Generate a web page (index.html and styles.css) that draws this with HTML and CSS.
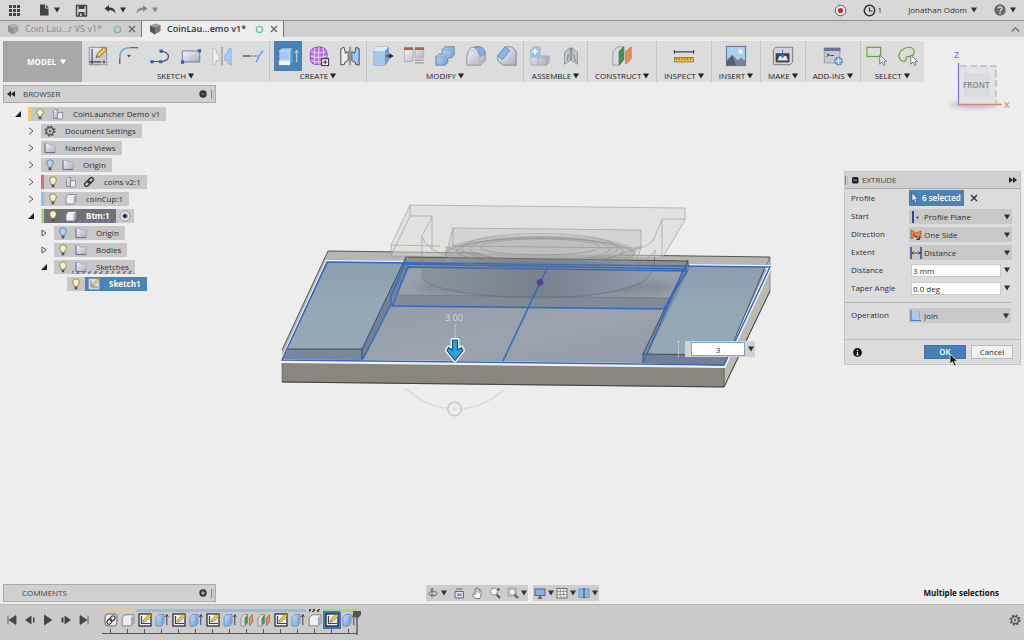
FILE: index.html
```html
<!DOCTYPE html>
<html lang="en">
<head>
<meta charset="utf-8">
<title>CoinLauncher Demo v1</title>
<link rel="stylesheet" href="styles.css">
</head>
<body>
<svg class="defs" aria-hidden="true">
  <defs>
    <linearGradient id="gBlue" x1="0" y1="0" x2="1" y2="1"><stop offset="0" stop-color="#c3dcf6"/><stop offset="1" stop-color="#6d9fda"/></linearGradient>
    <linearGradient id="gGrey" x1="0" y1="0" x2="1" y2="1"><stop offset="0" stop-color="#f6f6fa"/><stop offset="1" stop-color="#a9acba"/></linearGradient>
    <symbol id="caret" viewBox="0 0 6 6"><path d="M0 0.5h6L3 5.5z" fill="currentColor"/></symbol>
    <symbol id="cube-tab" viewBox="0 0 12 12"><path d="M1 2.5 6.5 0.5 11.5 2 6 4.5z" fill="#999"/><path d="M1 2.5 6 4.5V11.5L1 8.5z" fill="#555"/><path d="M6 4.5 11.5 2V8L6 11.5z" fill="#777"/></symbol>
    <symbol id="x" viewBox="0 0 8 8"><path d="M1 1 7 7M7 1 1 7" stroke="currentColor" stroke-width="1.4"/></symbol>
    <symbol id="ring" viewBox="0 0 8 8"><circle cx="4" cy="4" r="2.8" fill="none" stroke="#66c2a4" stroke-width="1.2"/></symbol>
    <symbol id="bulb" viewBox="0 0 12 12"><path d="M6 .8a3.3 3.3 0 0 1 3.3 3.3C9.300 5.800 7.800 6.400 7.700 8.400H4.300C4.200 6.400 2.700 5.800 2.700 4.100A3.300 3.300 0 0 1 6 .8z" fill="#fff3b5" stroke="#78705a" stroke-width=".8"/><path d="M4.500 9.200h3M4.800 10.600h2.400" stroke="#444" stroke-width="1.1"/></symbol>
    <symbol id="bulb-off" viewBox="0 0 12 12"><path d="M6 .8a3.3 3.3 0 0 1 3.3 3.3C9.300 5.800 7.800 6.400 7.700 8.400H4.300C4.200 6.400 2.700 5.800 2.700 4.100A3.300 3.300 0 0 1 6 .8z" fill="#b3d3f1" stroke="#5d748c" stroke-width=".8"/><path d="M4.500 9.200h3M4.800 10.600h2.400" stroke="#444" stroke-width="1.1"/></symbol>
    <symbol id="folder" viewBox="0 0 12 12"><path d="M.8 10.500V1.500H4.500L5.500 3H11.300V10.500z" fill="url(#gGrey)" stroke="#a3a5b3" stroke-width=".7"/><path d="M1 1.500V10.600H11" fill="none" stroke="#6b6e80"/></symbol>
    <symbol id="comp" viewBox="0 0 12 12"><path d="M1.500 2.500 2.500 1.500H5.500V10.500H1.500z" fill="url(#gGrey)" stroke="#7f8294" stroke-width=".8"/><path d="M5.500 5.500 7 4.500H10.500V9.500L9.500 11H5.500z" fill="#e9eaf0" stroke="#7f8294" stroke-width=".8"/></symbol>
    <symbol id="box" viewBox="0 0 12 12"><path d="M1 4 3.500 1.500H11V8.500L8.500 11H1z" fill="#efeff4" stroke="#777988" stroke-width=".8" stroke-linejoin="round"/><path d="M8.500 11V4L11 1.500V8.500z" fill="#aaacba"/></symbol>
    <symbol id="link" viewBox="0 0 12 12"><g fill="none" stroke="#333" stroke-width="1.300" transform="rotate(-45 6 6)"><rect x=".6" y="4" width="6.200" height="4" rx="2"/><rect x="5.200" y="4" width="6.200" height="4" rx="2"/></g></symbol>
    <symbol id="link-box" viewBox="0 0 14 14"><rect x="1" y="1" width="12" height="12" rx="3" fill="#e8e8e8" stroke="#666"/><g fill="none" stroke="#333" stroke-width="1.100" transform="rotate(-45 7 7)"><rect x="2" y="5" width="5.600" height="4" rx="2"/><rect x="6.400" y="5" width="5.600" height="4" rx="2"/></g></symbol>
    <symbol id="gear" viewBox="0 0 12 12"><circle cx="6" cy="6" r="4.700" fill="none" stroke="#555" stroke-width="1.600" stroke-dasharray="2 1.690"/><circle cx="6" cy="6" r="3.500" fill="none" stroke="#555" stroke-width="1.300"/><circle cx="6" cy="6" r="1.200" fill="#555"/></symbol>
    <symbol id="sketch" viewBox="0 0 14 14"><rect x="1" y="1" width="12" height="12" fill="#f0f1f5" stroke="#223" stroke-width="1.200"/><path d="M3.500 3V10.500H12" fill="none" stroke="#3c3f4c" stroke-width="1.200"/><path d="M5 9 5.800 6.500 11.500 1 13.500 3 7.500 8.500z" fill="#f3c544" stroke="#7a5a10" stroke-width=".6"/></symbol>
    <symbol id="sketch-light" viewBox="0 0 14 14"><rect x="1" y="1" width="12" height="12" fill="#dfe3ec" stroke="#9fb0c6" stroke-width=".8"/><path d="M3.500 3V10.500H12" fill="none" stroke="#5a6072"/><path d="M5 9 5.800 6.500 11.500 1 13.500 3 7.500 8.500z" fill="#f3d566" stroke="#7a6a30" stroke-width=".6"/></symbol>
    <symbol id="ext" viewBox="0 0 14 14"><path d="M1 4.500 3.500 1.500H9V10L6.500 13H1z" fill="url(#gBlue)" stroke="#6684a6" stroke-width=".8" stroke-linejoin="round"/><path d="M6.500 13V4.500L9 1.500V10z" fill="#7ba3d4"/><path d="M11.800 12V2M10.300 4 11.800 1.500 13.300 4" fill="none" stroke="#333" stroke-width=".9"/></symbol>
    <symbol id="plane" viewBox="0 0 14 14"><path d="M1 5 4 1.500H7.500V10L4.500 13H1z" fill="#dcdee2" stroke="#777" stroke-width=".7"/><path d="M4.500 5 7.500 1.500V10L4.500 13z" fill="#459a58"/><path d="M9.500 4.500 12.500 1.500V9.500L9.500 12.500z" fill="#ea8f5c" stroke="#a65329" stroke-width=".6"/></symbol>
    <symbol id="cursor" viewBox="0 0 10 14"><path d="M1 1V11L3.500 8.800 5.300 13 7.200 12.100 5.400 8.200H8.600z" fill="#111" stroke="#eee" stroke-width=".8"/></symbol>
    <symbol id="tri-open" viewBox="0 0 8 8"><path d="M7 1V7H1z" fill="#222"/></symbol>
    <symbol id="chev" viewBox="0 0 8 8"><path d="M2 .8 6 4 2 7.200" fill="none" stroke="#555"/></symbol>
    <symbol id="tri" viewBox="0 0 8 8"><path d="M2 1 6 4 2 7z" fill="#f4f4f4" stroke="#444" stroke-width=".9"/></symbol>
  </defs>
</svg>

<header class="topbar">
  <button class="plain" aria-label="Data panel"><svg class="i13" viewBox="0 0 13 13"><path d="M1 1h3v3H1zM5 1h3v3H5zM9 1h3v3H9zM1 5h3v3H1zM5 5h3v3H5zM9 5h3v3H9zM1 9h3v3H1zM5 9h3v3H5zM9 9h3v3H9z" fill="#444"/></svg></button>
  <button class="plain drop" aria-label="File"><svg class="i12" viewBox="0 0 12 12"><path d="M2 .5H7V4.500H10.500V11.500H2zM7.800.5 10.500 3.700H7.800z" fill="#444"/></svg><svg class="car"><use href="#caret"/></svg></button>
  <button class="plain save" aria-label="Save"><svg class="i13" viewBox="0 0 13 13"><path d="M1.500 1.500H11.500V12H1.500z" fill="none" stroke="#444" stroke-width="1.400"/><path d="M3.500 1.500H9.500V5H3.500zM3.500 8H9.500V12H3.500z" fill="#444"/><path d="M5 9.500H6.500V12H5z" fill="#ddd"/></svg></button>
  <button class="plain drop undo" aria-label="Undo"><svg class="i12" viewBox="0 0 12 12"><path d="M.5 4.500 5 1V3.500C9 3.300 11.500 5.500 11.500 9.500 10 7 8 6 5 6V8z" fill="#333"/></svg><svg class="car"><use href="#caret"/></svg></button>
  <button class="plain drop redo" aria-label="Redo"><svg class="i12" viewBox="0 0 12 12"><path d="M11.500 4.500 7 1V3.500C3 3.300.5 5.500.5 9.500 2 7 4 6 7 6V8z" fill="#888"/></svg><svg class="car"><use href="#caret"/></svg></button>
  <span class="grow"></span>
  <button class="plain" aria-label="Record"><svg class="i13" viewBox="0 0 13 13"><circle cx="6.500" cy="6.500" r="5.300" fill="#f6efef" stroke="#555"/><circle cx="6.500" cy="6.500" r="2.600" fill="#c92a2a"/></svg></button>
  <button class="plain jobs"><svg class="i13" viewBox="0 0 13 13"><circle cx="6.500" cy="6.500" r="5.200" fill="none" stroke="#333" stroke-width="1.500"/><path d="M6.500 3.500V7H9.500" fill="none" stroke="#333" stroke-width="1.200"/></svg>1</button>
  <button class="plain user">Jonathan Odom <svg class="car"><use href="#caret"/></svg></button>
  <button class="plain help" aria-label="Help"><svg class="i12" viewBox="0 0 12 12"><circle cx="6" cy="6" r="5.700" fill="#666"/><path d="M4 4.600C4 2.200 8 2.200 8 4.500 8 6 6 6 6 7.600M6 8.600V10" fill="none" stroke="#eee" stroke-width="1.300"/></svg><svg class="car"><use href="#caret"/></svg></button>
</header>

<nav class="tabs">
  <div class="tab off"><svg class="i12"><use href="#cube-tab"/></svg><a href="#v5">Coin Lau...r V5 v1*</a><svg class="i9"><use href="#ring"/></svg><button class="plain" aria-label="Close tab"><svg class="i8"><use href="#x"/></svg></button></div>
  <div class="tab on"><svg class="i12"><use href="#cube-tab"/></svg><a href="#demo">CoinLau...emo v1*</a><svg class="i9"><use href="#ring"/></svg><button class="plain" aria-label="Close tab"><svg class="i8"><use href="#x"/></svg></button></div>
  <button class="plain collapse" aria-label="Collapse"><svg class="i9" viewBox="0 0 9 9"><path d="M.8 6.500 4.500 2.800 8.200 6.500" fill="none" stroke="#666" stroke-width="1.300"/></svg></button>
</nav>

<main class="work">
  <svg class="scene" viewBox="0 37 1024 567" role="img" aria-label="3D model">
    <defs>
      <linearGradient id="gCyl" x1="0" x2="1"><stop offset="0" stop-color="#8a949f"/><stop offset=".5" stop-color="#77818e"/><stop offset="1" stop-color="#929baa"/></linearGradient>
      <linearGradient id="gFloor" x1="0" x2="1" y1="0" y2="1"><stop offset="0" stop-color="#8d97a3"/><stop offset=".6" stop-color="#9aa3ae"/><stop offset="1" stop-color="#8c95a2"/></linearGradient>
      <linearGradient id="gPanel" x1="0" x2="0" y1="0" y2="1"><stop offset="0" stop-color="#8c9dac"/><stop offset=".5" stop-color="#94a8b6"/></linearGradient>
      <filter id="soft" x="-20%" y="-50%" width="140%" height="200%"><feGaussianBlur stdDeviation="4"/></filter>
    </defs>
    <path d="M328 251 770 257V291L724 387 282 382V350z" fill="#b6b7b0"/>
    <path d="M770 257V291L724 387V367z" fill="#b9bab1" stroke="#555" stroke-width=".6"/>
    <path d="M282 361 724 366V387L282 382z" fill="#8a857e" stroke="#555" stroke-width=".6"/>
    <path d="M282 350 328 251 480 253M620 255 770 257M282 382 724 387 770 291" fill="none" stroke="#333" stroke-width=".8"/>
    <path d="M327 262 770 267 724 366 282 361z" fill="url(#gFloor)" stroke="#eef2f6" stroke-width="4"/>
    <path d="M408 257 688 261V271H405z" fill="#8f8e89"/>
    <path d="M408 267 687 271 664 309 392 306z" fill="#99a0aa"/>
    <ellipse cx="545" cy="287" rx="130" ry="10" fill="#697380" opacity=".5" filter="url(#soft)"/>
    <path d="M397 295 671 298 664 309 392 306z" fill="#828a98"/>
    <path d="M422 265V276C424 288 470 297 535 298 590 298 630 290 645 280 652 275 655 272 655 267 630 258 450 256 422 265z" fill="url(#gCyl)"/>
    <path d="M422 276C424 288 470 297 535 298 590 298 630 290 645 280 652 274 655 266 655 250" fill="none" stroke="#687380" stroke-width=".8"/>
    <path d="M397 295 671 298M408 267 397 295" fill="none" stroke="#66707d" stroke-width=".6"/>
    <path d="M327 262 406 263 362 349H288z" fill="url(#gPanel)"/>
    <path d="M406 257 362 349V360L410 266z" fill="#71819a"/>
    <path d="M288 349H362V360L282 359z" fill="#78879b"/>
    <path d="M688 266 765 267 728 355 643 354z" fill="url(#gPanel)"/>
    <path d="M643 354 728 355 724 366 643 363z" fill="#718095"/>
    <path d="M688 259 643 354V363L690 268z" fill="#7d8ba0"/>
    <path d="M288 349H362V360M362 349 406 257 688 261 643 354V363M643 354 728 355 765 267M285 353 327 263" fill="none" stroke="#2e3844" stroke-width=".8"/>
    <g fill="none" stroke="#3468bf" stroke-width="1.500">
      <path d="M327 262 770 267 724 365 282 360z"/>
      <path d="M408 267 687 271 664 309 392 306z"/>
      <path d="M363 359 391 304V296L405 264M643 363 683 271"/>
      <path d="M403 264 687 269M548 266 503 361"/>
    </g>
    <circle cx="540" cy="282.500" r="3.200" fill="#5b3b9b"/>
    <path d="M410 205 685 208V220L663 257H445L391 256V245z" fill="#d6d6d3" opacity=".5"/>
    <path d="M453 228 641 230V248L630 262H445z" fill="#b0b0ac" opacity=".25"/>
    <ellipse cx="540" cy="252" rx="96" ry="17" fill="#777" opacity=".22"/>
    <g fill="none" stroke="#858585" stroke-width=".7" opacity=".7">
      <path d="M391 256V245L410 205 685 208V220L663 257M410 205V216L391 256M410 216H432V250M422 278V236L432 217M391 245 440 246M391 256 445 257"/>
      <path d="M662 257V219H685M662 219 653 241Q648 246 630 252M453 228 641 230V248L631 275M453 228V246M453 228 445 257M453 246 641 248"/>
      <ellipse cx="540" cy="248" rx="78" ry="14.500"/><ellipse cx="540" cy="249" rx="70" ry="12"/><ellipse cx="540" cy="251" rx="83" ry="13"/><ellipse cx="540" cy="247" rx="60" ry="8"/><ellipse cx="540" cy="254" rx="94" ry="16"/>
      <path d="M422 237Q430 263 540 275 640 278 655 250M445 247Q500 262 560 263 610 262 641 246"/>
    </g>
    <path d="M405 388Q428 409 455 409T503 390" fill="none" stroke="#dadada" stroke-width="1.500"/>
    <circle cx="454.500" cy="409" r="6.800" fill="#eee" stroke="#c8c8c8" stroke-width="1.500"/><circle cx="454.500" cy="409" r="2" fill="#ddd"/>
    <text x="445" y="321" class="dim-text">3.00</text>
    <path d="M455 324V340" stroke="#c0c7cf"/>
    <path d="M452.500 340H457.500V350L461.500 347.500 463 350.500 455 360.500 447 350.500 448.500 347.500 452.500 350z" fill="#2ba4dc" stroke="#f2f6fa" stroke-width="4" stroke-linejoin="round"/>
    <path d="M452.500 340H457.500V350L461.500 347.500 463 350.500 455 360.500 447 350.500 448.500 347.500 452.500 350z" fill="#2ba4dc" stroke="#1d506b" stroke-width="1.200" stroke-linejoin="round"/>
  </svg>

  <div class="toolbar">
    <button class="model">MODEL <svg class="car"><use href="#caret"/></svg></button>
    <section class="grp">
      <div class="tools">
        <button class="tool" aria-label="Create sketch"><svg viewBox="0 0 24 24"><rect x="2.500" y="2.500" width="19" height="19" fill="url(#gGrey)" stroke="#85889a"/><path d="M5.500 4V18.500H20M3 18.500H5.500V21" fill="none" stroke="#3e4356" stroke-width="1.300"/><path d="M10 13.500 11.500 9.500 18.500 2.500 21.500 5.500 14 12.500z" fill="#f5cb4c" stroke="#7c6125"/><path d="M18.500 14.500V22M15 18.500H22" stroke="#fff" stroke-width="3"/><path d="M18.500 15V22M15 18.500H22" stroke="#333"/></svg></button>
        <button class="tool" aria-label="Fillet"><svg viewBox="0 0 24 24"><path d="M2 21V14M13 3H22" stroke="#444" stroke-width="1.200"/><path d="M2 14Q2 3 13 3" fill="none" stroke="#7ba4de" stroke-width="1.800"/><path d="M10 11H14L12 13.500z" fill="#444"/></svg></button>
        <button class="tool" aria-label="Line"><svg viewBox="0 0 24 24"><path d="M3 18H13C24 18 24 7 13 7" fill="none" stroke="#48506a" stroke-width="1.300"/><path d="M1.500 16.500h3.500V20H1.500zM11 16.500h3.500V20H11zM11.500 5h3.500v3.500h-3.500z" fill="#2e5db5"/></svg></button>
        <button class="tool" aria-label="Rectangle"><svg viewBox="0 0 24 24"><path d="M2.500 6.500H21.500V18.500H2.500z" fill="url(#gGrey)" stroke="#6e748a"/><path d="M19.500 4.500h3.500V8h-3.500zM1 17h3.500v3.500H1z" fill="#2e5db5"/></svg></button>
        <button class="tool" aria-label="Mirror"><svg viewBox="0 0 24 24"><path d="M2 4Q6 2 6 9L9 11V17L5.500 17V20L2 22z" fill="#eceded" stroke="#b8b9c2"/><path d="M22 4Q18 2 18 9L15 11V17L18.500 17V20L22 22z" fill="#a9c9ee" stroke="#8eb1dc"/><path d="M12 2V22" stroke="#777"/></svg></button>
        <button class="tool" aria-label="Trim"><svg viewBox="0 0 24 24"><path d="M1 12H9" stroke="#444" stroke-width="1.400"/><path d="M10 12H18" stroke="#5a8bd3" stroke-width="1.400" stroke-dasharray="2.500 1"/><path d="M23 6 18.500 12 15.500 19" fill="none" stroke="#7ba4de" stroke-width="1.800"/></svg></button>
      </div>
      <button class="lab">SKETCH<svg class="car"><use href="#caret"/></svg></button>
    </section>
    <section class="grp">
      <div class="tools">
        <button class="tool sel" aria-label="Extrude"><svg viewBox="0 0 24 24"><path d="M2 6 5 3H17V18L14 22H2z" fill="#a5c9f2" stroke="#3d5f88" stroke-width=".8" stroke-linejoin="round"/><path d="M14 6.500 17 3V18L14 22z" fill="#6596d3"/><path d="M2 17H14V22H2z" fill="#eef3f9"/><path d="M2 6.500H14V21.500" fill="none" stroke="#d3e5f9" stroke-width=".8"/><path d="M21.500 19V7M19.500 9 21.500 5.500 23.500 9" fill="none" stroke="#d3dfec"/></svg></button>
        <button class="tool" aria-label="Create form"><svg viewBox="0 0 24 24"><path d="M3 6Q6 2 12 2T20 6Q22 11 20 18 17 21.500 11 21.500T3 18Q1.500 11 3 6z" fill="#b673e0" stroke="#8247b5"/><path d="M3 7Q11 10 20 7M2.500 12Q11 15 21 12M3 17Q11 20 20 17M7.500 3Q6 12 7.500 21M12 2Q11 12 12 21.500M16.500 3Q18 12 16 20" fill="none" stroke="#ecd0fa" stroke-width="1.100"/><rect x="15" y="15" width="7.500" height="7.500" fill="#f5f5f5" stroke="#222"/><path d="M16.500 18.800H21M18.800 16.500V21" stroke="#222"/></svg></button>
        <button class="tool" aria-label="Mirror body"><svg viewBox="0 0 24 24"><path d="M2 4 5.500 2.500 7 9 10 7V17L6 19V21L2 22z" fill="#eee" stroke="#444"/><path d="M22 4 18.500 2.500 17 9 14 7V17L18 19V21L22 22z" fill="#9fc6f0" stroke="#444"/><path d="M12 2V22" stroke="#444"/></svg></button>
      </div>
      <button class="lab">CREATE<svg class="car"><use href="#caret"/></svg></button>
    </section>
    <section class="grp">
      <div class="tools">
        <button class="tool" aria-label="Press pull"><svg viewBox="0 0 24 24"><path d="M2 6.500 6 2H18V17L14 22H2z" fill="url(#gGrey)" stroke="#8a8e9c" stroke-width=".8"/><path d="M6 2H18L14 6.500H2z" fill="#e6ecf4"/><path d="M14 6.500 18 2V17L14 22z" fill="#6c9ad2"/><path d="M2 6.500H14V22H2z" fill="#a8c7ea"/><path d="M15.500 12H20M19.500 10 22.500 12 19.500 14z" stroke="#222" stroke-width="1.200" fill="#222"/></svg></button>
        <button class="tool" aria-label="Change parameters"><svg viewBox="0 0 24 24"><path d="M1.500 5H11V18H1.500zM13 5H22.500V14H13z" fill="url(#gGrey)" stroke="#a3a5b0" stroke-width=".8"/><path d="M1 2.500H11V5.500H1zM13 2.500H23V5.500H13z" fill="#b95e46"/><path d="M13 16.500H22.500M13 19.500H22.500" stroke="#888"/></svg></button>
        <button class="tool" aria-label="Combine"><svg viewBox="0 0 24 24"><path d="M9 5 12 2H22V11L19 14H15V19L12 22H2V13L5 10H9z" fill="url(#gBlue)" stroke="#56779f" stroke-width=".9"/><path d="M9 5H19V14M19 5 22 2M2 13H12V22M12 13 15 10" fill="none" stroke="#7299c8" stroke-width=".7"/></svg></button>
        <button class="tool" aria-label="Fillet edge"><svg viewBox="0 0 24 24"><path d="M2 12Q3 3 10 2H17L22 8V17L17 22H2z" fill="url(#gGrey)" stroke="#8a8e9c"/><path d="M10 3Q14 1.500 17 2 22 4 22 9L16 13Q16 6 10 3z" fill="#86b1e2" stroke="#5a80ab" stroke-width=".8"/><path d="M2 13Q4 6 9 6 15 7 16 13V22" fill="none" stroke="#b3b6c2" stroke-width=".8"/></svg></button>
        <button class="tool" aria-label="Chamfer"><svg viewBox="0 0 24 24"><path d="M2 12 10 2H17L22 7V22H8L2 17z" fill="url(#gGrey)" stroke="#7d818f"/><path d="M2 12 10 2 15 6 7 16z" fill="#8bb7ea" stroke="#5a80ab" stroke-width=".8"/></svg></button>
      </div>
      <button class="lab">MODIFY<svg class="car"><use href="#caret"/></svg></button>
    </section>
    <section class="grp">
      <div class="tools">
        <button class="tool" aria-label="New component"><svg viewBox="0 0 24 24"><path d="M2 5 5 2H12V12H22V19L19 22H2z" fill="url(#gGrey)" stroke="#9a9dab" stroke-width=".7"/><path d="M2 5 5 2H12V12L10 14H2z" fill="#9dc0ea"/><path d="M10 14V22M10 14H19V22M19 14 22 12" fill="none" stroke="#9598a8" stroke-width=".7"/><path d="M6.500 4V10M3.500 7H9.500" stroke="#fff" stroke-width="2"/></svg></button>
        <button class="tool" aria-label="Joint"><svg viewBox="0 0 24 24"><path d="M5 8 11 3V17L5 21zM13 3 19 8V21L13 17z" fill="#c5c8cd" stroke="#8b8f97"/><path d="M11 5Q12 2 13 5M9 10 8 17M15 10 17 18M12 3V17" fill="none" stroke="#777c85"/></svg></button>
      </div>
      <button class="lab">ASSEMBLE<svg class="car"><use href="#caret"/></svg></button>
    </section>
    <section class="grp">
      <div class="tools"><button class="tool" aria-label="Offset plane"><svg viewBox="0 0 24 24"><path d="M2 7 7 2H14L9 7V22H2z" fill="#d8dbe0" stroke="#888" stroke-width=".8"/><path d="M9 7 14 2V16L9 22z" fill="#459456" stroke="#2c6c3a" stroke-width=".7"/><path d="M16 7 22 2V15L16 21z" fill="#eb8e55" stroke="#c0673a" stroke-width=".7"/></svg></button></div>
      <button class="lab">CONSTRUCT<svg class="car"><use href="#caret"/></svg></button>
    </section>
    <section class="grp">
      <div class="tools"><button class="tool" aria-label="Measure"><svg viewBox="0 0 24 24"><path d="M1.500 7.500H22.500M1.500 5.500V9.500M22.500 5.500V9.500" stroke="#444" stroke-width="1.200"/><rect x="1.500" y="13.500" width="21" height="5" fill="#f2b93b" stroke="#876c30" stroke-width=".8"/><path d="M4 14V16M7 14V16M10 14V16M13 14V16M16 14V16M19 14V16" stroke="#705818"/></svg></button></div>
      <button class="lab">INSPECT<svg class="car"><use href="#caret"/></svg></button>
    </section>
    <section class="grp">
      <div class="tools"><button class="tool" aria-label="Insert image"><svg viewBox="0 0 24 24"><rect x="1.500" y="1.500" width="21" height="21" fill="#a8cef3" stroke="#556781"/><circle cx="17" cy="7" r="2.500" fill="#fff8d0"/><path d="M2 16 8 11 14 17 17 14 22 17V22H2z" fill="#7b8496"/><path d="M2 18 8 11 12 22H2z" fill="#565f71"/></svg></button></div>
      <button class="lab">INSERT<svg class="car"><use href="#caret"/></svg></button>
    </section>
    <section class="grp">
      <div class="tools"><button class="tool" aria-label="3D print"><svg viewBox="0 0 24 24"><path d="M1.500 5 4 2.500H22.500V19L20 21.500H1.500z" fill="#d3d4d8" stroke="#75777e"/><rect x="4" y="9" width="15" height="10" fill="#3e4148"/><path d="M6 17 8 12H15.500L17.500 17z" fill="#dce5ef"/><path d="M11.500 5V11M9.500 11H13.500L11.500 14z" stroke="#2878c0" fill="#2878c0"/></svg></button></div>
      <button class="lab">MAKE<svg class="car"><use href="#caret"/></svg></button>
    </section>
    <section class="grp">
      <div class="tools"><button class="tool" aria-label="Scripts"><svg viewBox="0 0 24 24"><path d="M2.500 3.500H19.500V19.500H2.500z" fill="#c6cbd6" stroke="#838b9b" stroke-width=".8"/><path d="M2 3H20V6.500H2z" fill="#64779a"/><path d="M5 9.500 8 11 5 12.500M9 11.500H13" fill="none" stroke="#333"/><circle cx="18" cy="17.500" r="4" fill="#91b7e8" stroke="#456da6" stroke-width="1.500" stroke-dasharray="2 1"/><path d="M18 14V21M14.500 17.500H21.500" stroke="#e8f1fb"/></svg></button></div>
      <button class="lab">ADD-INS<svg class="car"><use href="#caret"/></svg></button>
    </section>
    <section class="grp">
      <div class="tools">
        <button class="tool" aria-label="Window select"><svg viewBox="0 0 24 24"><rect x="1" y="2.500" width="15" height="10" fill="none" stroke="#6aa23c" stroke-width="1.300"/><path d="M15 11V21L17.500 18.500 19.500 22.500 21 21.500 19.500 18H22.500z" fill="#f8f8f8" stroke="#666" stroke-width=".9"/></svg></button>
        <button class="tool" aria-label="Freeform select"><svg viewBox="0 0 24 24"><path d="M5 17C-1 13 3 5 10 3S20 5 18 10 10 11 10 14 8 19 5 17z" fill="none" stroke="#6aa23c" stroke-width="1.300"/><path d="M15 11V21L17.500 18.500 19.500 22.500 21 21.500 19.500 18H22.500z" fill="#f8f8f8" stroke="#666" stroke-width=".9"/></svg></button>
      </div>
      <button class="lab">SELECT<svg class="car"><use href="#caret"/></svg></button>
    </section>
  </div>

  <div class="stage">
    <aside class="browser">
      <h2 class="bar"><svg class="i8" viewBox="0 0 8 8"><path d="M4 1V7L0 4zM8 1V7L4 4z" fill="#222"/></svg><span class="grow">BROWSER</span><svg class="i8" viewBox="0 0 8 8"><circle cx="4" cy="4" r="3.700" fill="#333"/><path d="M2 4H6" stroke="#777"/></svg><i class="grip"></i></h2>
      <ul class="tree">
        <li class="d0"><svg class="arr"><use href="#tri-open"/></svg><span class="chip"><i class="st yellow"></i><svg><use href="#bulb"/></svg><svg><use href="#comp"/></svg><b>CoinLauncher Demo v1</b></span></li>
        <li class="d1"><svg class="arr"><use href="#chev"/></svg><span class="chip"><svg><use href="#gear"/></svg><b>Document Settings</b></span></li>
        <li class="d1"><svg class="arr"><use href="#chev"/></svg><span class="chip"><svg><use href="#folder"/></svg><b>Named Views</b></span></li>
        <li class="d1"><svg class="arr"><use href="#chev"/></svg><span class="chip"><svg><use href="#bulb-off"/></svg><svg><use href="#folder"/></svg><b>Origin</b></span></li>
        <li class="d1"><svg class="arr"><use href="#chev"/></svg><span class="chip"><i class="st red"></i><svg><use href="#bulb"/></svg><svg><use href="#comp"/></svg><svg><use href="#link"/></svg><b>coins v2:1</b></span></li>
        <li class="d1"><svg class="arr"><use href="#chev"/></svg><span class="chip"><i class="st blue"></i><svg><use href="#bulb"/></svg><svg><use href="#box"/></svg><b>coinCup:1</b></span></li>
        <li class="d1"><svg class="arr"><use href="#tri-open"/></svg><span class="chip dark"><i class="st green"></i><svg><use href="#bulb"/></svg><span class="hatch"><svg><use href="#box"/></svg><b>Btm:1</b></span></span><span class="chip"><svg viewBox="0 0 12 12"><circle cx="6" cy="6" r="5" fill="#eee" stroke="#999"/><circle cx="6" cy="6" r="2.800" fill="#889"/><circle cx="6" cy="6" r="1.600" fill="#113"/></svg></span></li>
        <li class="d2"><svg class="arr"><use href="#tri"/></svg><span class="chip"><svg><use href="#bulb-off"/></svg><svg><use href="#folder"/></svg><b>Origin</b></span></li>
        <li class="d2"><svg class="arr"><use href="#tri"/></svg><span class="chip"><svg><use href="#bulb"/></svg><svg><use href="#folder"/></svg><b>Bodies</b></span></li>
        <li class="d2"><svg class="arr"><use href="#tri-open"/></svg><span class="chip"><svg><use href="#bulb"/></svg><span class="hatch"><svg><use href="#folder"/></svg><b>Sketches</b></span></span></li>
        <li class="d3"><span class="chip"><svg><use href="#bulb"/></svg></span><span class="chip picked"><svg><use href="#sketch-light"/></svg><b>Sketch1</b></span></li>
      </ul>
    </aside>

    <div class="right">
      <svg class="viewcube" viewBox="0 0 70 66" role="img" aria-label="View cube">
        <defs><filter id="cs" x="-30%" y="-80%" width="160%" height="260%"><feGaussianBlur stdDeviation="2"/></filter></defs>
        <ellipse cx="30" cy="59" rx="24" ry="3" fill="#999" opacity=".6" filter="url(#cs)"/>
        <path d="M15 20H52V58H15z" fill="#e3e3e5"/><path d="M20 27H46V51H20z" fill="#d9dbdf"/>
        <path d="M16 20H52V57" fill="none" stroke="#aaa" stroke-dasharray="7 3"/>
        <path d="M14.500 17V59" stroke="#7f78e0" stroke-width="1.300"/><path d="M14 58.500H58" stroke="#d98084" stroke-width="1.300"/>
        <text x="19" y="42" class="face">FRONT</text><text x="10" y="12" class="ax z">Z</text><text x="60" y="62" class="ax xx">X</text>
      </svg>

      <form class="dialog">
        <h2 class="bar"><i class="grip"></i><svg class="i8" viewBox="0 0 8 8"><rect x="1" y="1" width="6.500" height="6.500" rx="1.500" fill="#222"/><path d="M2.500 4.200H6" stroke="#aaa"/></svg><span class="grow">EXTRUDE</span><svg class="i8" viewBox="0 0 8 8"><path d="M0 1V7L4 4zM4 1V7L8 4z" fill="#222"/></svg></h2>
        <div class="fields">
          <div class="row"><span>Profile</span><button type="button" class="pick"><svg viewBox="0 0 10 12"><path d="M2 1V9L4 7.500 5.500 11 7 10.300 5.500 7H8z" fill="#eaf2fb" stroke="#234a78" stroke-width=".6"/></svg>6 selected</button><button type="button" class="plain" aria-label="Clear"><svg class="i8"><use href="#x"/></svg></button></div>
          <div class="row"><label for="start">Start</label><span class="sel-wrap"><svg class="lead" viewBox="0 0 12 12"><path d="M3 0V12" stroke="#2f4a85" stroke-width="2"/><circle cx="7.500" cy="6.500" r="1" fill="#222"/></svg><select id="start"><option>Profile Plane</option></select><svg class="car"><use href="#caret"/></svg></span></div>
          <div class="row"><label for="dir">Direction</label><span class="sel-wrap"><svg class="lead" viewBox="0 0 12 12"><path d="M1 1 6 4 11 2V9L6 7 1 10z" fill="#ef8343" stroke="#99481d" stroke-width=".6"/><path d="M3 5 9 10.500M9.500 7.500V10.500H6.500" fill="none" stroke="#333"/></svg><select id="dir"><option>One Side</option></select><svg class="car"><use href="#caret"/></svg></span></div>
          <div class="row"><label for="extent">Extent</label><span class="sel-wrap"><svg class="lead" viewBox="0 0 12 12"><path d="M1 0V12M11 0V12" stroke="#2f4a85" stroke-width="1.500"/><path d="M1 6H11M3.500 4.500 2 6 3.500 7.500M8.500 4.500 10 6 8.500 7.500" fill="none" stroke="#333" stroke-width=".8"/></svg><select id="extent"><option>Distance</option></select><svg class="car"><use href="#caret"/></svg></span></div>
          <div class="row"><label for="dist">Distance</label><span class="in-wrap"><input id="dist" value="3 mm"><svg class="car"><use href="#caret"/></svg></span></div>
          <div class="row"><label for="taper">Taper Angle</label><span class="in-wrap"><input id="taper" value="0.0 deg"><svg class="car"><use href="#caret"/></svg></span></div>
        </div>
        <div class="fields second">
          <div class="row"><label for="op">Operation</label><span class="sel-wrap"><svg class="lead" viewBox="0 0 12 12"><path d="M1 1H9.500V10.500H1z" fill="#a9caf2"/><path d="M1 0V10.500H11" fill="none" stroke="#4a78b8" stroke-width="1.200"/><path d="M9.500 1V9" stroke="#83a9d8"/></svg><select id="op"><option>Join</option></select><svg class="car"><use href="#caret"/></svg></span></div>
        </div>
        <footer class="foot"><svg class="i9" viewBox="0 0 9 9"><circle cx="4.500" cy="4.500" r="4.400" fill="#111"/><path d="M4.500 1.800V3M4.500 4V7.200M3.400 7H5.600" stroke="#fff" stroke-width="1.200"/></svg><span class="grow"></span><button type="button" class="ok">OK<svg class="pointer"><use href="#cursor"/></svg></button><button type="button" class="cancel">Cancel</button></footer>
      </form>
    </div>

    <div class="mini"><i class="dots"></i><input aria-label="Distance" value="3"><svg class="car"><use href="#caret"/></svg></div>
  </div>

  <div class="lower">
    <h2 class="bar comments"><span class="grow">COMMENTS</span><svg class="i8" viewBox="0 0 8 8"><circle cx="4" cy="4" r="3.700" fill="#333"/><path d="M2 4H6M4 2V6" stroke="#ccc"/></svg><i class="grip"></i></h2>
    <div class="nav">
      <div class="navset">
        <button class="plain" aria-label="Orbit"><svg class="i12" viewBox="0 0 12 12"><ellipse cx="6" cy="6.500" rx="4.500" ry="2" fill="none" stroke="#666" stroke-width=".9"/><path d="M5 1.500V10.500M3.500 3 5 1.500 6.500 3M7 9.500 8.500 8" fill="none" stroke="#555" stroke-width=".9"/></svg><svg class="car"><use href="#caret"/></svg></button>
        <button class="plain" aria-label="Look at"><svg class="i12" viewBox="0 0 12 12"><path d="M2 4.500H10.500V11H2zM3 2H9.500" fill="#dcdfe8" stroke="#666c7e"/><path d="M4 6.500H8.500V9H4z" fill="#8d94a6"/></svg></button>
        <button class="plain" aria-label="Pan"><svg class="i12" viewBox="0 0 12 12"><path d="M4 11.500 1.200 7.500 2.300 6.700 4 8V2H5.500V1H7V2H8.500V3H10V8L8.800 11.500z" fill="#f8f8f8" stroke="#666" stroke-width=".8"/><path d="M5.500 2.500V6M7 2V6M8.500 3V6" stroke="#888" stroke-width=".7"/></svg></button>
        <button class="plain" aria-label="Zoom"><svg class="i12" viewBox="0 0 12 12"><path d="M6.500 6.500 11 11" stroke="#555" stroke-width="2"/><circle cx="5" cy="4.500" r="3.500" fill="#f4f6fa" stroke="#8a90a0"/><path d="M9.500 1V4M8 2.500H11" stroke="#555"/></svg></button>
        <button class="plain" aria-label="Fit"><svg class="i12" viewBox="0 0 12 12"><path d="M7 7 11 11" stroke="#555" stroke-width="2"/><rect x="1" y="1" width="8.500" height="8" fill="none" stroke="#888" stroke-width=".8" stroke-dasharray="2 1"/><circle cx="5" cy="5" r="3.300" fill="#f4f6fa" stroke="#8a90a0"/></svg><svg class="car"><use href="#caret"/></svg></button>
      </div>
      <div class="navset">
        <button class="plain" aria-label="Display"><svg class="i12" viewBox="0 0 12 12"><rect x="1" y="2" width="10" height="6.500" fill="#89b3e8" stroke="#4a628a"/><path d="M4 11H8M6 9V11" stroke="#555" stroke-width="1.400"/></svg><svg class="car"><use href="#caret"/></svg></button>
        <button class="plain" aria-label="Grid"><svg class="i12" viewBox="0 0 12 12"><rect x="1" y="1.500" width="10" height="9.500" fill="#eee" stroke="#666" stroke-width=".9"/><path d="M1 4.500H11M1 7.500H11M4.300 1.500V11M7.600 1.500V11" stroke="#888" stroke-width=".8"/></svg><svg class="car"><use href="#caret"/></svg></button>
        <button class="plain" aria-label="Viewports"><svg class="i12" viewBox="0 0 12 12"><rect x="1" y="2" width="10" height="8.500" fill="#8db8eb" stroke="#6288ba" stroke-width=".8"/><path d="M6 1V11.500" stroke="#345"/></svg><svg class="car"><use href="#caret"/></svg></button>
      </div>
    </div>
    <p class="status">Multiple selections</p>
  </div>
</main>

<footer class="timeline">
  <div class="play">
    <button class="plain" aria-label="Start"><svg class="i12" viewBox="0 0 12 12"><path d="M2 1.500V10.500M10 1.500V10.500L3 6z" fill="#444" stroke="#444" stroke-width=".8"/></svg></button>
    <button class="plain" aria-label="Step back"><svg class="i12" viewBox="0 0 12 12"><path d="M7.500 1.500V10.500L1 6zM9 3.500V8.500H10.500V3.500z" fill="#444"/></svg></button>
    <button class="plain" aria-label="Play"><svg class="i12" viewBox="0 0 12 12"><path d="M2 .5V11.500L10.500 6z" fill="#444"/></svg></button>
    <button class="plain" aria-label="Step forward"><svg class="i12" viewBox="0 0 12 12"><path d="M4.500 1.500V10.500L11 6zM1.500 3.500V8.500H3.500V3.500z" fill="#444"/></svg></button>
    <button class="plain" aria-label="End"><svg class="i12" viewBox="0 0 12 12"><path d="M10 1.500V10.500M2 1.500V10.500L9 6z" fill="#444" stroke="#444" stroke-width=".8"/></svg></button>
  </div>
  <ol class="steps">
    <li class="so"><svg><use href="#link-box"/></svg></li>
    <li class="so"><svg><use href="#box"/></svg></li>
    <li class="sb"><svg><use href="#sketch"/></svg></li>
    <li class="sb"><svg><use href="#ext"/></svg></li>
    <li class="sb"><svg><use href="#sketch"/></svg></li>
    <li class="sb"><svg><use href="#ext"/></svg></li>
    <li class="sb"><svg><use href="#sketch"/></svg></li>
    <li class="sb"><svg><use href="#ext"/></svg></li>
    <li class="sb"><svg><use href="#plane"/></svg></li>
    <li class="sb"><svg><use href="#plane"/></svg></li>
    <li class="sb"><svg><use href="#sketch"/></svg></li>
    <li class="sb"><svg><use href="#ext"/></svg></li>
    <li class="sh"><svg><use href="#box"/></svg></li>
    <li class="sg now"><svg><use href="#sketch"/></svg></li>
    <li class="sg"><svg><use href="#ext"/></svg></li>
  </ol>
  <svg class="marker" viewBox="0 0 10 24"><path d="M1 0H9V4L5 8 1 4zM4.300 7H5.700V24H4.300z" fill="#555"/></svg>
  <span class="grow"></span>
  <button class="plain settings" aria-label="Settings"><svg class="i12"><use href="#gear"/></svg></button>
</footer>
</body>
</html>
```
FILE: styles.css
```css
* { box-sizing: border-box; }
body {
  margin: 0;
  min-height: 100vh;
  display: flex;
  flex-direction: column;
  background: #ededed;
  color: #303030;
  font: 8px/12px "Open Sans", "Noto Sans", sans-serif;
}
button, input, select { font: inherit; color: inherit; margin: 0; }
h2, p, ul, ol { margin: 0; padding: 0; font-size: 8px; font-weight: 400; list-style: none; }
svg { display: block; flex: none; }
.defs { position: absolute; width: 0; height: 0; }
.plain { border: 0; padding: 0; background: none; display: flex; align-items: center; gap: 4px; }
.grow { flex: 1; }
.car { width: 6px; height: 6px; }
.i8 { width: 8px; height: 8px; }
.i9 { width: 9px; height: 9px; }
.i12 { width: 12px; height: 12px; }
.i13 { width: 13px; height: 13px; }

.topbar { height: 21px; padding: 0 8px; display: flex; align-items: center; background: #d7d7d7; border-bottom: 1px solid #8f8f8f; }
.topbar .drop { margin-left: 17px; }
.topbar .save { margin-left: 15px; }
.topbar .undo { margin-left: 16px; }
.topbar .redo { margin-left: 10px; color: #888; }
.jobs { margin-left: 16px; gap: 2px; }
.user { margin-left: 26px; }
.help { margin-left: 17px; }

.tabs { height: 16px; display: flex; background: #d0d0d0; }
.tab { width: 142px; padding: 0 5px 0 7px; display: flex; align-items: center; gap: 6px; border-right: 1px solid #777; font-size: 9px; }
.tab a { flex: 1; color: inherit; text-decoration: none; white-space: nowrap; }
.tab.off { color: #888; background: #cecece; }
.tab.off > .i12 { opacity: .5; }
.tab.on { background: #ededed; font-weight: 600; }
.tab button { color: #666; }
.collapse { margin-left: auto; margin-right: 4px; }

.work { flex: 1; position: relative; display: flex; flex-direction: column; padding: 4px 3px 2px; }
.scene { position: absolute; inset: 0; width: 100%; height: 100%; }
.dim-text { font-size: 9px; fill: #d3d8de; }
.toolbar { position: relative; align-self: flex-start; display: flex; height: 41px; background: #dcdcdc; }
.model { width: 79px; border: 0; border-left: 4px double #999; padding: 0 0 0 4px; background: #a8a8a8; color: #fff; font-weight: 700; display: flex; align-items: center; justify-content: center; gap: 4px; }
.grp { padding: 0 1px; border-right: 1px solid #c4c4c4; display: flex; flex-direction: column; align-items: center; }
.grp:last-child { border: 0; }
.tools { display: flex; gap: 1px; }
.tool { width: 30px; height: 30px; border: 0; padding: 0; background: none; display: grid; place-items: center; }
.tool svg { width: 22px; height: 22px; }
.tool.sel { width: 28px; margin: 0 1px 0 3px; background: #4b82b5; }
.lab { border: 0; background: none; padding: 0 6px; line-height: 10px; display: flex; align-items: center; gap: 2px; white-space: nowrap; color: #222; }

.stage { flex: 1; position: relative; display: flex; justify-content: space-between; }
.bar { display: flex; align-items: center; gap: 8px; height: 18px; padding: 0 1px 0 3px; background: #d0d0d0; border: 1px solid #aaa; color: #444; }
.bar .grip { margin-left: -4px; }
.grip { width: 3px; height: 9px; border-left: 1px solid #888; border-right: 1px solid #bbb; }
.browser { padding-top: 3px; width: 213px; }
.tree { padding-top: 2px; }
.tree li { height: 17px; display: flex; align-items: center; }
.d0 { padding-left: 11px; }
.d1 { padding-left: 24px; }
.d2 { padding-left: 37px; }
.d3 { padding-left: 64px; }
.arr { width: 8px; height: 8px; margin-right: 6px; }
.chip { height: 14px; display: flex; align-items: center; background: #c7c7c7; }
.chip svg { width: 12px; height: 12px; margin: 0 3px; }
.chip b { font-weight: 400; padding: 0 6px; white-space: nowrap; }
.hatch { height: 14px; display: flex; align-items: center; background: repeating-linear-gradient(120deg, #7280a3 0 2px, transparent 2px 5px) 0 100% / 100% 3px no-repeat; }
.st { width: 3px; align-self: stretch; }
.yellow { background: #f6c76b; }
.red { background: #e8627a; }
.blue { background: #86c5f0; }
.green { background: #b2d67b; }
.dark { background: #707070; color: #fff; }
.dark b, .picked b { font-weight: 700; }
.picked { background: #4a83b8; color: #fff; }

.right { display: flex; flex-direction: column; align-items: flex-end; width: 177px; }
.viewcube { width: 70px; height: 66px; margin: -36px 7px 59px 0; }
.face { font-size: 8px; font-weight: 600; fill: #858991; }
.ax { font-size: 9px; font-weight: 600; }
.z { fill: #8079e8; }
.xx { fill: #ea7c80; }
.dialog { width: 100%; background: #dcdcdc; border: 1px solid #c4c4c4; }
.dialog .bar { height: 17px; border-width: 0 0 1px; gap: 3px; padding: 0 3px 0 0; }
.dialog .bar .grip { margin: 0; }
.fields { padding: 0 8px 5px 6px; }
.second { margin-right: 9px; padding: 3px 0 15px 6px; border-top: 1px solid #b5b5b5; }
.row { display: grid; grid-template-columns: 58px auto 1fr; align-items: center; height: 18px; }
.row > .sel-wrap, .row > .in-wrap { grid-column: 2 / 4; }
.pick { height: 16px; border: 0; padding: 0 3px 0 1px; margin-right: 6px; background: #4a83b8; color: #fff; font-weight: 600; display: flex; align-items: center; gap: 2px; }
.pick svg { width: 10px; height: 12px; }
.sel-wrap { position: relative; height: 15px; background: #c8c8c8; }
.sel-wrap select { appearance: none; width: 100%; height: 15px; border: 0; padding: 0 12px 0 15px; background: none; line-height: 15px; }
.sel-wrap .lead { position: absolute; left: 1px; top: 2px; width: 12px; height: 12px; }
.sel-wrap .car { position: absolute; right: 2px; top: 5px; }
.in-wrap { display: flex; align-items: center; gap: 3px; padding: 0 2px; }
.in-wrap input { flex: 1; min-width: 0; height: 13px; border: 1px solid #ccc; padding: 0 1px; background: #fff; }
.foot { border-top: 1px solid #bdbdbd; height: 25px; padding: 0 7px 0 8px; display: flex; align-items: center; gap: 5px; }
.ok, .cancel { width: 42px; height: 14px; padding: 0; border: 1px solid #b9b9b9; background: #f1f1f1; line-height: 12px; }
.ok { position: relative; border-color: #3c6fa2; background: #4580b8; color: #fff; font-weight: 600; }
.pointer { position: absolute; left: 24px; top: 7px; width: 10px; height: 14px; }

.mini { position: absolute; left: 675px; top: 259px; display: flex; align-items: center; height: 16px; width: 77px; padding-right: 1px; gap: 3px; background: linear-gradient(90deg, transparent 7px, #d2d2d2 7px); }
.mini input { flex: 1; min-width: 0; height: 14px; border: 1px solid #72a6dc; padding: 0; text-align: center; background: #fff; }
.dots { width: 10px; height: 16px; border-left: 1px dotted #dde3ea; }

.lower { position: relative; display: grid; grid-template-columns: 213px 1fr 213px; align-items: center; }
.comments { padding-left: 18px; }
.nav { display: flex; justify-content: center; gap: 5px; }
.navset { display: flex; align-items: center; gap: 6px; height: 16px; padding: 0 1px; background: #cdcdcd; }
.navset + .navset { gap: 2px; }
.navset .plain { gap: 2px; }
.status { justify-self: end; padding-right: 22px; font-weight: 700; color: #111; }

.timeline { height: 36px; display: flex; align-items: center; padding: 0 3px 0 6px; background: #cbcbcb; border-top: 1px solid #b5b5b5; }
.play { display: flex; gap: 6px; width: 96px; margin-bottom: 6px; }
.steps { display: flex; margin-bottom: 2px; }
.steps li { width: 17px; height: 25px; padding-top: 1px; border-top: 3px solid transparent; display: flex; flex-direction: column; align-items: center; border-bottom: 1px solid #555; }
.steps svg { width: 14px; height: 14px; }
.steps li::after { content: ""; width: 1px; height: 4px; margin-top: 2px; background: #555; }
.steps .so { border-top-color: #efc88b; }
.steps .sb { border-top-color: #91c0e2; }
.steps .sg { border-top-color: #acd37e; }
.steps .sh { background: repeating-linear-gradient(115deg, #54412a 0 2px, #cbcbcb 2px 4px) 3px 0 / 12px 3px no-repeat border-box; }
.steps .now svg { background: #3f78b4; outline: 2px solid #3f78b4; }
.marker { width: 10px; height: 24px; margin-left: -5px; }
.settings { margin-bottom: 6px; }
```
